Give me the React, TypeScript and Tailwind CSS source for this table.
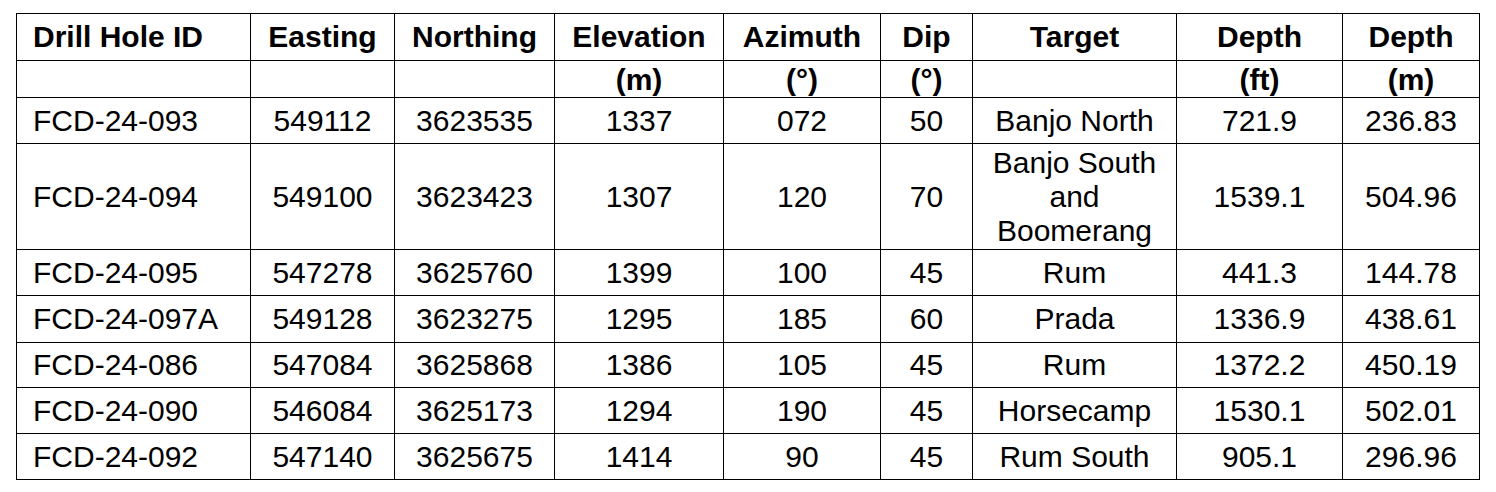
import React from "react";

type Row = {
  id: string;
  e: string;
  n: string;
  el: string;
  az: string;
  dip: string;
  target: string[];
  ft: string;
  m: string;
  h: string;
};

const rows: Row[] = [
  { id: "FCD-24-093", e: "549112", n: "3623535", el: "1337", az: "072", dip: "50", target: ["Banjo North"], ft: "721.9", m: "236.83", h: "h-[46px]" },
  { id: "FCD-24-094", e: "549100", n: "3623423", el: "1307", az: "120", dip: "70", target: ["Banjo South", "and", "Boomerang"], ft: "1539.1", m: "504.96", h: "h-[106px]" },
  { id: "FCD-24-095", e: "547278", n: "3625760", el: "1399", az: "100", dip: "45", target: ["Rum"], ft: "441.3", m: "144.78", h: "h-[46px]" },
  { id: "FCD-24-097A", e: "549128", n: "3623275", el: "1295", az: "185", dip: "60", target: ["Prada"], ft: "1336.9", m: "438.61", h: "h-[47px]" },
  { id: "FCD-24-086", e: "547084", n: "3625868", el: "1386", az: "105", dip: "45", target: ["Rum"], ft: "1372.2", m: "450.19", h: "h-[45px]" },
  { id: "FCD-24-090", e: "546084", n: "3625173", el: "1294", az: "190", dip: "45", target: ["Horsecamp"], ft: "1530.1", m: "502.01", h: "h-[46px]" },
  { id: "FCD-24-092", e: "547140", n: "3625675", el: "1414", az: "90", dip: "45", target: ["Rum South"], ft: "905.1", m: "296.96", h: "h-[46px]" },
];

const cell = "border border-black p-0 align-middle";

export default function App() {
  return (
    <div
      className="w-[1496px] h-[492px] bg-white pl-[16px] pt-[13px] text-black"
      style={{ fontFamily: '"Liberation Sans", Arial, sans-serif' }}
    >
      <table className="table-fixed border-collapse w-[1463px] text-[30px] leading-[34px]">
        <colgroup>
          <col className="w-[234px]" />
          <col className="w-[144px]" />
          <col className="w-[160px]" />
          <col className="w-[169px]" />
          <col className="w-[157px]" />
          <col className="w-[92px]" />
          <col className="w-[204px]" />
          <col className="w-[166px]" />
          <col className="w-[137px]" />
        </colgroup>
        <thead>
          <tr className="h-[47px] font-bold">
            <th className={`${cell} text-left pl-4 font-bold`}>Drill Hole ID</th>
            <th className={`${cell} text-center font-bold`}>Easting</th>
            <th className={`${cell} text-center font-bold`}>Northing</th>
            <th className={`${cell} text-center font-bold`}>Elevation</th>
            <th className={`${cell} text-center font-bold`}>Azimuth</th>
            <th className={`${cell} text-center font-bold`}>Dip</th>
            <th className={`${cell} text-center font-bold`}>Target</th>
            <th className={`${cell} text-center font-bold`}>Depth</th>
            <th className={`${cell} text-center font-bold`}>Depth</th>
          </tr>
          <tr className="h-[37px] font-bold">
            <th className="border border-black p-0 align-bottom"></th>
            <th className="border border-black p-0 align-bottom"></th>
            <th className="border border-black p-0 align-bottom"></th>
            <th className="border border-black p-0 align-bottom text-center font-bold">(m)</th>
            <th className="border border-black p-0 align-bottom text-center font-bold">(°)</th>
            <th className="border border-black p-0 align-bottom text-center font-bold">(°)</th>
            <th className="border border-black p-0 align-bottom"></th>
            <th className="border border-black p-0 align-bottom text-center font-bold">(ft)</th>
            <th className="border border-black p-0 align-bottom text-center font-bold">(m)</th>
          </tr>
        </thead>
        <tbody>
          {rows.map((r) => (
            <tr key={r.id} className={r.h}>
              <td className={`${cell} text-left pl-4`}>{r.id}</td>
              <td className={`${cell} text-center`}>{r.e}</td>
              <td className={`${cell} text-center`}>{r.n}</td>
              <td className={`${cell} text-center`}>{r.el}</td>
              <td className={`${cell} text-center`}>{r.az}</td>
              <td className={`${cell} text-center`}>{r.dip}</td>
              <td className={`${cell} text-center`}>
                {r.target.map((t) => (
                  <div key={t}>{t}</div>
                ))}
              </td>
              <td className={`${cell} text-center`}>{r.ft}</td>
              <td className={`${cell} text-center`}>{r.m}</td>
            </tr>
          ))}
        </tbody>
      </table>
    </div>
  );
}
